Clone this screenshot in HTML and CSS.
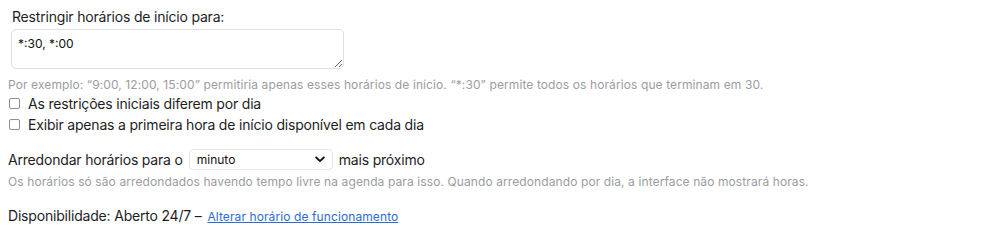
FILE: index.html
```html
<!DOCTYPE html>
<html lang="pt">
<head>
<meta charset="utf-8">
<link rel="stylesheet" href="styles.css">
</head>
<body>
<div class="form">
  <div class="field">
    <label class="label" for="restrict">Restringir horários de início para:</label>
    <textarea id="restrict" class="textarea">*:30, *:00</textarea>
    <p class="help">Por exemplo: “9:00, 12:00, 15:00” permitiria apenas esses horários de início. “*:30” permite todos os horários que terminam em 30.</p>
    <label class="check"><input type="checkbox" class="box"><span>As restrições iniciais diferem por dia</span></label>
    <label class="check"><input type="checkbox" class="box"><span>Exibir apenas a primeira hora de início disponível em cada dia</span></label>
  </div>
  <div class="field round">
    <div class="inline">
      <span>Arredondar horários para o</span>
      <span class="select">
        <span class="select-text">minuto</span>
        <svg class="chev" width="10" height="7" viewBox="0 0 10 7"><path d="M1.2 1.5 L5 5.2 L8.8 1.5" fill="none" stroke="#111" stroke-width="1.8" stroke-linecap="round" stroke-linejoin="round"/></svg>
      </span>
      <span>mais próximo</span>
    </div>
    <p class="help">Os horários só são arredondados havendo tempo livre na agenda para isso. Quando arredondando por dia, a interface não mostrará horas.</p>
  </div>
  <div class="avail">Disponibilidade: Aberto 24/7 – <a href="#" class="link">Alterar horário de funcionamento</a></div>
</div>
</body>
</html>
```
FILE: styles.css
```css
html, body { margin: 0; padding: 0; background: #fff; }
body {
  font-family: Inter, "Liberation Sans", Arial, sans-serif;
  font-size: 14px;
  letter-spacing: -0.19px;
  color: #1d1d1f;
  padding: 8px;
}
.form { display: flex; flex-direction: column; }
.field { display: flex; flex-direction: column; }
.label { padding-left: 4px; line-height: 17px; }
.textarea {
  margin: 4px 0 0 3px;
  width: 333px;
  height: 40px;
  box-sizing: border-box;
  border: 1px solid #e0e0e0;
  border-radius: 5px;
  padding: 6px 6px;
  font-family: Inter, "Liberation Sans", Arial, sans-serif;
  font-size: 12px;
  letter-spacing: 0;
  color: #111;
  resize: vertical;
  outline: none;
}
.help {
  margin: 8px 0 0 0;
  font-size: 12px;
  letter-spacing: 0.1px;
  line-height: 15px;
  color: #9c9ca1;
}
.check {
  display: flex;
  align-items: center;
  gap: 8px;
  line-height: 17px;
  margin-top: 3px;
}
.check + .check { margin-top: 4px; }
.box {
  appearance: none;
  -webkit-appearance: none;
  width: 11px;
  height: 11px;
  margin: 0 0 0 1px;
  border: 1px solid #8e8e93;
  border-radius: 2px;
  background: #fff;
}
.round { margin-top: 16px; }
.inline { display: flex; align-items: center; gap: 6px; }
.select {
  display: inline-flex;
  align-items: center;
  justify-content: space-between;
  width: 144px;
  height: 21px;
  box-sizing: border-box;
  border: 1px solid #e6e6e6;
  border-radius: 4px;
  padding: 0 7px 0 7px;
  font-size: 12px;
  letter-spacing: 0;
  color: #111;
}
.round .help { margin-top: 4px; }
.avail { margin-top: 18px; line-height: 17px; }
.link { margin-left: 2px; color: #2b6bd8; text-decoration: underline; font-size: 12px; letter-spacing: 0.1px; }
```
